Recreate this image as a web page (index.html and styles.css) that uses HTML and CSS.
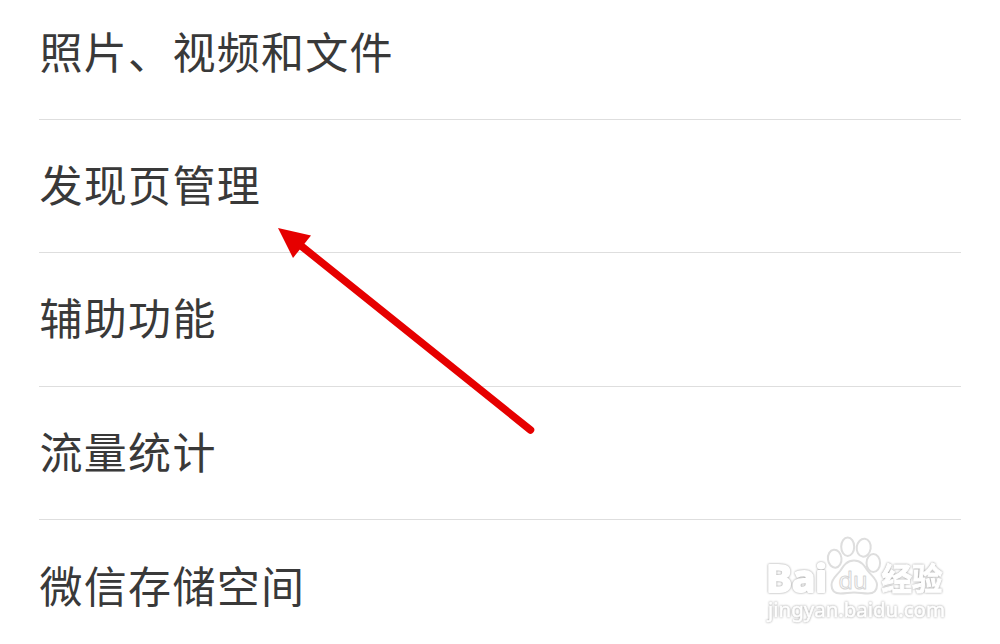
FILE: index.html
```html
<!DOCTYPE html>
<html lang="zh-CN">
<head>
  <meta charset="UTF-8">
  <meta name="viewport" content="width=device-width, initial-scale=1.0">
  <title>通用</title>
  <link rel="stylesheet" href="styles.css">
</head>
<body>

  <ul class="settings">
    <li class="item">照片、视频和文件</li>
    <li class="item">发现页管理</li>
    <li class="item">辅助功能</li>
    <li class="item">流量统计</li>
    <li class="item">微信存储空间</li>
  </ul>

  <svg class="arrow" viewBox="0 0 1000 644">
    <line x1="300" y1="245" x2="530.5" y2="430" />
    <polygon points="278,228 311,235.5 293,258" />
  </svg>

  <svg class="watermark" viewBox="0 0 190 92">
    <text class="bai" x="6" y="57.5" textLength="61" lengthAdjust="spacingAndGlyphs">Bai</text>
    <g class="paw">
      <ellipse cx="74.7" cy="24.7" rx="6.8" ry="9" transform="rotate(-6 74.7 24.7)" />
      <ellipse cx="87.7" cy="12.7" rx="6.5" ry="9.2" />
      <ellipse cx="103.7" cy="13.7" rx="7" ry="9" transform="rotate(8 103.7 13.7)" />
      <ellipse cx="113.3" cy="29" rx="6.8" ry="9" />
      <path d="M94 26.5C87 26.5 84 31 80.5 36.5C77 41.5 71.5 44.5 71.5 51C71.5 57 75 59.5 80.5 59.5C85.5 59.5 89 58.5 94 58.5C99 58.5 103 59.5 108 59.5C113.5 59.5 117 56.5 117 51C117 44.5 111 41.5 107.5 36.5C104 31 101 26.5 94 26.5Z" />
    </g>
    <text class="du" x="78.5" y="54.5" textLength="29" lengthAdjust="spacingAndGlyphs">du</text>
    <text class="jingyan" x="121.5" y="55.5" textLength="61" lengthAdjust="spacingAndGlyphs">经验</text>
    <text class="url" x="8" y="82.5" textLength="177" lengthAdjust="spacingAndGlyphs">jingyan.baidu.com</text>
  </svg>

</body>
</html>
```
FILE: styles.css
```css
body {
  font-family: "Noto Sans CJK SC", sans-serif;
  margin: 0;
  height: 644px;
  position: relative;
  overflow: hidden;
  background-color: #fff;
  color: #393939;
}

.settings {
  list-style: none;
  margin: 0;
  padding: 0 39px;
}

.item {
  display: flex;
  align-items: center;
  box-sizing: border-box;
  height: 133.3px;
  padding: 0 0 6px 0.5px;
  border-bottom: 1px solid #dedede;
  font-size: 43px;
  letter-spacing: 1.3px;
}

.item:first-child {
  height: 120px;
  padding-bottom: 20px;
}

.item:last-child {
  border-bottom: none;
}

/* Red pointer */
.arrow {
  position: absolute;
  top: 0;
  left: 0;
  width: 1000px;
  height: 644px;
}

.arrow line {
  stroke: #e60000;
  stroke-width: 7.5;
  stroke-linecap: round;
}

.arrow polygon {
  fill: #e60000;
}

/* Watermark */
.watermark {
  position: absolute;
  left: 760px;
  top: 534px;
  width: 190px;
  height: 92px;
  font-family: "Noto Sans", "Noto Sans CJK SC", sans-serif;
  font-weight: bold;
}

.watermark text {
  fill: #fff;
  stroke: #fff;
  stroke-width: 1;
  stroke-linejoin: round;
  filter: drop-shadow(0 0 1px #999);
}

.watermark .bai {
  font-size: 37px;
  stroke-width: 2;
}

.paw ellipse,
.paw path {
  fill: #fff;
  stroke: #dedede;
  stroke-width: 2;
}

.watermark .du {
  font-size: 24px;
  font-weight: normal;
  stroke: #d4d4d4;
  filter: none;
}

.watermark .jingyan {
  font-family: "Noto Sans CJK SC", sans-serif;
  font-size: 31px;
}

.watermark .url {
  font-size: 20px;
  font-weight: normal;
  stroke-width: 0.6;
}
```
